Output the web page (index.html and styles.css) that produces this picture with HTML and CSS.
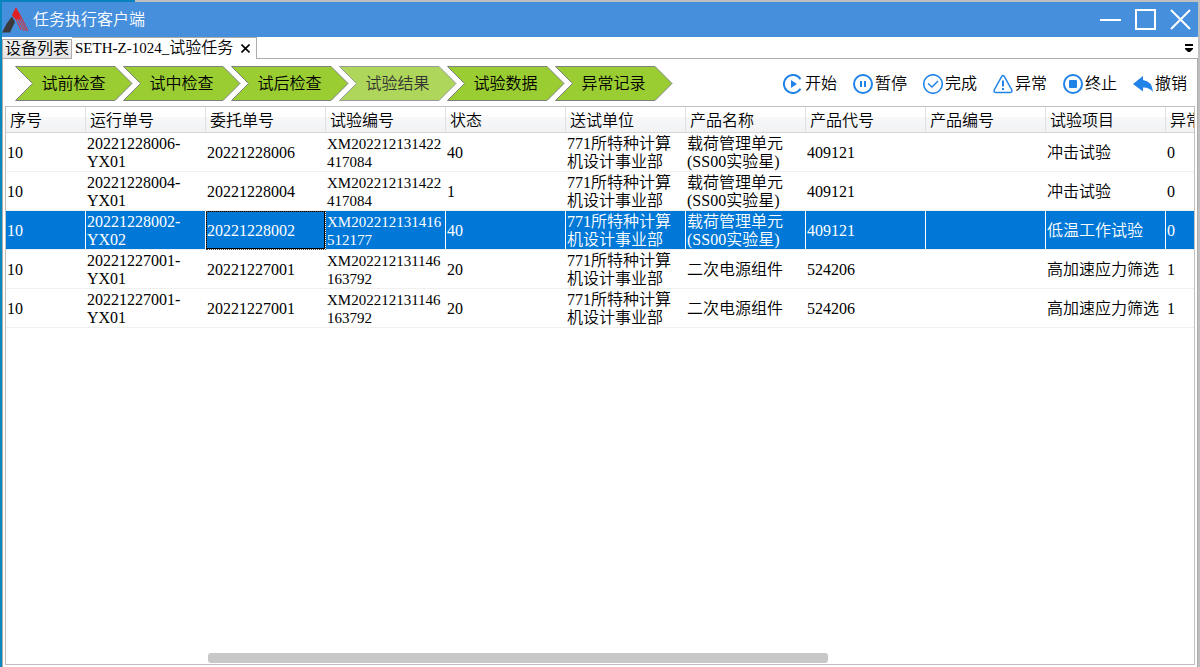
FILE: index.html
```html
<!DOCTYPE html>
<html lang="zh-CN">
<head>
<meta charset="utf-8">
<title>任务执行客户端</title>
<link rel="stylesheet" href="styles.css">
</head>
<body>
<div class="top-edge"></div>
<div class="window">
  <header class="titlebar">
    <svg class="logo" width="26" height="26" viewBox="0 0 26 26" aria-hidden="true">
      <path d="M0 25.500L5 16L10 9.500L13 15L8 25.500Z" fill="#3a3a3c"/>
      <path d="M14 0L10 8L13 12L19 13L17 6Z" fill="#e02020"/>
      <path d="M13 10L19 23M15 10L22 24M17 10L24 24" stroke="#d8303c" stroke-width="1"/>
      <path d="M17 6L26 24" stroke="#e02020" stroke-width="1"/>
    </svg>
    <h1 class="title">任务执行客户端</h1>
    <div class="window-controls">
      <button class="control" aria-label="最小化"><svg width="21" height="21" viewBox="0 0 21 21"><path d="M0 11H21"/></svg></button>
      <button class="control" aria-label="最大化"><svg width="21" height="21" viewBox="0 0 21 21"><path d="M1 1H20V20H1Z"/></svg></button>
      <button class="control" aria-label="关闭"><svg width="21" height="21" viewBox="0 0 21 21"><path d="M1 1L20 20M20 1L1 20"/></svg></button>
    </div>
  </header>
  <nav class="tabs">
    <button class="tab">设备列表</button>
    <button class="tab active"><span class="tab-name"><span class="code">SETH-Z-1024_</span>试验任务</span>
      <svg width="9" height="9" viewBox="0 0 9 9" aria-hidden="true"><path d="M.5 .5L8.500 8.500M8.500 .5L.5 8.500" stroke="#000" stroke-width="1.600"/></svg></button>
    <div class="tab-rest">
      <button class="tab-menu" aria-label="选项卡列表"><svg width="8" height="8" viewBox="0 0 8 8"><path d="M0 0H8V2H0ZM0 4H8V5L5 8H3L0 5Z"/></svg></button>
    </div>
  </nav>
  <main class="page">
    <div class="toolbar">
      <div class="steps">
        <button class="step"><svg width="119" height="35" viewBox="0 0 119 35"><path d="M1.500 .5H101L118 17.500L101 34.500H1.500L18.500 17.500Z"/></svg><span>试前检查</span></button>
        <button class="step"><svg width="119" height="35" viewBox="0 0 119 35"><path d="M1.500 .5H101L118 17.500L101 34.500H1.500L18.500 17.500Z"/></svg><span>试中检查</span></button>
        <button class="step"><svg width="119" height="35" viewBox="0 0 119 35"><path d="M1.500 .5H101L118 17.500L101 34.500H1.500L18.500 17.500Z"/></svg><span>试后检查</span></button>
        <button class="step current"><svg width="119" height="35" viewBox="0 0 119 35"><path d="M1.500 .5H101L118 17.500L101 34.500H1.500L18.500 17.500Z"/></svg><span>试验结果</span></button>
        <button class="step"><svg width="119" height="35" viewBox="0 0 119 35"><path d="M1.500 .5H101L118 17.500L101 34.500H1.500L18.500 17.500Z"/></svg><span>试验数据</span></button>
        <button class="step"><svg width="119" height="35" viewBox="0 0 119 35"><path d="M1.500 .5H101L118 17.500L101 34.500H1.500L18.500 17.500Z"/></svg><span>异常记录</span></button>
      </div>
      <div class="actions">
        <button class="action"><svg width="20" height="20" viewBox="0 0 20 20"><path class="line" d="M17.500 5.200A9 9 0 1 0 17.500 14.800"/><path class="solid" d="M8 6L14 10L8 14Z"/></svg>开始</button>
        <button class="action"><svg width="20" height="20" viewBox="0 0 20 20"><circle class="line" cx="10" cy="10" r="9"/><path class="line" d="M8 7V13M12 7V13"/></svg>暂停</button>
        <button class="action"><svg width="20" height="20" viewBox="0 0 20 20"><circle class="line thin" cx="10" cy="10" r="9.300"/><path class="line thin" d="M5 9.500L9 13L15 7"/></svg>完成</button>
        <button class="action"><svg width="20" height="20" viewBox="0 0 20 20"><path class="line thin" d="M8.600 2.600Q10 .6 11.400 2.600L18.800 16Q19.500 18.300 17.500 18.500H2.500Q.5 18.300 1.200 16Z"/><path class="line" d="M10 6.500V12.500M10 14V16"/></svg>异常</button>
        <button class="action"><svg width="20" height="20" viewBox="0 0 20 20"><circle class="line" cx="10" cy="10" r="9"/><rect class="solid" x="6" y="6" width="8" height="8" rx="1"/></svg>终止</button>
        <button class="action"><svg width="20" height="20" viewBox="0 0 20 20"><path class="solid" d="M0 10L10 2V6Q19 7 20 18Q16 13 10 13.500V17.500Z"/></svg>撤销</button>
      </div>
    </div>
    <section class="grid">
      <div class="grid-view">
        <table class="table">
          <colgroup><col class="col-index"><col><col><col><col><col><col><col><col><col><col></colgroup>
          <thead>
            <tr><th>序号</th><th>运行单号</th><th>委托单号</th><th>试验编号</th><th>状态</th><th>送试单位</th><th>产品名称</th><th>产品代号</th><th>产品编号</th><th>试验项目</th><th>异常</th></tr>
          </thead>
          <tbody>
            <tr><td>10</td><td>20221228006-<br>YX01</td><td>20221228006</td><td class="code">XM202212131422<br>417084</td><td>40</td><td>771所特种计算<br>机设计事业部</td><td>载荷管理单元<br>(SS00实验星)</td><td>409121</td><td></td><td>冲击试验</td><td>0</td></tr>
            <tr><td>10</td><td>20221228004-<br>YX01</td><td>20221228004</td><td class="code">XM202212131422<br>417084</td><td>1</td><td>771所特种计算<br>机设计事业部</td><td>载荷管理单元<br>(SS00实验星)</td><td>409121</td><td></td><td>冲击试验</td><td>0</td></tr>
            <tr class="selected"><td>10</td><td>20221228002-<br>YX02</td><td class="focused">20221228002</td><td class="code">XM202212131416<br>512177</td><td>40</td><td>771所特种计算<br>机设计事业部</td><td>载荷管理单元<br>(SS00实验星)</td><td>409121</td><td></td><td>低温工作试验</td><td>0</td></tr>
            <tr><td>10</td><td>20221227001-<br>YX01</td><td>20221227001</td><td class="code">XM202212131146<br>163792</td><td>20</td><td>771所特种计算<br>机设计事业部</td><td>二次电源组件</td><td>524206</td><td></td><td>高加速应力筛选</td><td>1</td></tr>
            <tr><td>10</td><td>20221227001-<br>YX01</td><td>20221227001</td><td class="code">XM202212131146<br>163792</td><td>20</td><td>771所特种计算<br>机设计事业部</td><td>二次电源组件</td><td>524206</td><td></td><td>高加速应力筛选</td><td>1</td></tr>
          </tbody>
        </table>
      </div>
      <div class="scroll-track"><div class="scroll-thumb"></div></div>
    </section>
  </main>
</div>
</body>
</html>
```

FILE: styles.css
```css
* { box-sizing: border-box; }

body {
  margin: 0;
  height: 100vh;
  display: flex;
  flex-direction: column;
  overflow: hidden;
  background: #fff;
  color: #000;
  font: 350 16px/18px "Liberation Serif", "Noto Sans CJK SC", serif;
}

button {
  margin: 0;
  padding: 0;
  border: 0;
  background: none;
  color: inherit;
  font: inherit;
}

svg { display: block; flex: none; }

.top-edge {
  height: 2px;
  flex: none;
  background: linear-gradient(to right, #0881bd 135px, #bfbfbf 135px);
}

.window {
  flex: 1;
  min-height: 0;
  display: flex;
  flex-direction: column;
  border-left: 2px solid #0a87bd;
  border-right: 2px solid #bfbfbf;
}

.titlebar {
  height: 35px;
  flex: none;
  display: flex;
  align-items: center;
  gap: 5px;
  padding-right: 7px;
  background: #468fdd;
  color: #fff;
}

.title {
  flex: 1;
  margin: 0;
  font-size: 16px;
  font-weight: 350;
}

.window-controls { display: flex; gap: 14px; }

.control path {
  fill: none;
  stroke: #fff;
  stroke-width: 2;
}

.tabs {
  height: 22px;
  flex: none;
  display: flex;
}

.tab {
  margin-top: 2px;
  padding: 0 2px;
  border: 1px solid #acacac;
  background: linear-gradient(#f2f2f2, #e4e4e4);
  white-space: nowrap;
}

.tab.active {
  display: flex;
  align-items: center;
  gap: 5px;
  width: 185px;
  margin-top: 0;
  padding: 0 6px 1px 3px;
  border-bottom: 0;
  border-left: 0;
  background: #fff;
}

.tab-name {
  flex: 1;
  text-align: left;
}

.tab-rest {
  flex: 1;
  display: flex;
  justify-content: flex-end;
  align-items: center;
  padding-right: 5px;
  border-bottom: 1px solid #acacac;
}

.page {
  flex: 1;
  min-height: 0;
  display: flex;
  flex-direction: column;
  padding: 7px 2px 2px;
  border-left: 1px solid #acacac;
  border-right: 1px solid #acacac;
}

.toolbar {
  flex: none;
  display: flex;
  justify-content: space-between;
  align-items: center;
  padding: 0 8px 5px 9px;
}

.steps { display: flex; }

.step {
  display: grid;
  place-items: center;
  margin-right: -11px;
}

.step > * { grid-area: 1 / 1; }

.step path {
  fill: #9acd32;
  stroke: #808080;
}

.step.current { opacity: 0.8; }

.actions { display: flex; gap: 16px; }

.action {
  display: flex;
  align-items: center;
  gap: 2px;
  white-space: nowrap;
}

.line {
  fill: none;
  stroke: #1f83e8;
  stroke-width: 2;
}

.thin { stroke-width: 1.5; }

.solid { fill: #1f83e8; }

.grid {
  flex: 1;
  min-height: 0;
  display: flex;
  flex-direction: column;
  border: 1px solid #c0c0c0;
}

.grid-view {
  flex: 1;
  min-height: 0;
  overflow: hidden;
}

.table {
  width: 1280px;
  table-layout: fixed;
  border-collapse: separate;
  border-spacing: 0;
}

.col-index { width: 80px; }

.table th {
  height: 26px;
  padding: 2px 4px 0;
  border-right: 1px solid #e0e1e3;
  border-bottom: 1px solid #d5d5d5;
  background: linear-gradient(#fff 40%, #f7f8fa 40%, #f1f2f4);
  font-weight: 350;
  text-align: left;
}

.table td {
  height: 39px;
  padding: 2px 1px 0;
  border-bottom: 1px solid #f0f0f0;
  white-space: nowrap;
}

.code { font-size: 15px; }

.table .selected td {
  border-right: 1px solid #fff;
  background: #0078d7;
  background-clip: padding-box;
  color: #fff;
}

.table .selected .focused {
  outline: 1px dotted #444;
  outline-offset: -1px;
  box-shadow: inset 0 0 0 1px #000;
}

.scroll-track {
  flex: none;
  padding-bottom: 1px;
}

.scroll-thumb {
  width: 52.2%;
  height: 10px;
  margin-left: 17%;
  border-radius: 3px;
  background: #c8c8c8;
}
```
